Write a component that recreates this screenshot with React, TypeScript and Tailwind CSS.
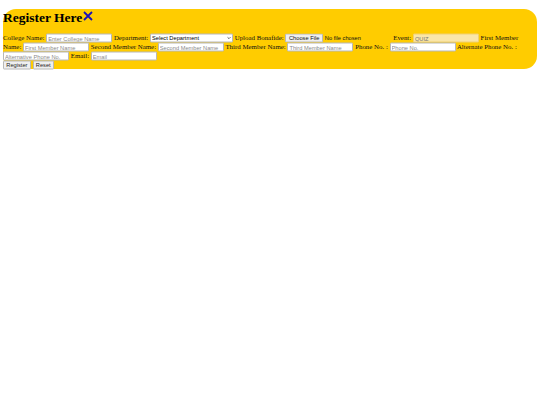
const inputClass =
  "box-border h-[9px] w-[66px] translate-y-[0.5px] rounded-[1px] border border-[#b8b8b8] bg-white px-[1px] py-0 align-top font-['Liberation_Sans',sans-serif] text-[5.7px] leading-[7px] text-black placeholder:text-[#8a8a8a]";

const buttonClass =
  "box-border h-[8.5px] translate-y-[0.5px] rounded-[1px] border border-[#b8b8b8] bg-[#efefef] px-[2.3px] py-0 align-top font-['Liberation_Sans',sans-serif] text-[5.7px] font-normal leading-[6px] text-[#222]";

function Field({ label, placeholder }: { label: string; placeholder: string }) {
  return (
    <>
      {label} <input type="text" placeholder={placeholder} className={inputClass} />{" "}
    </>
  );
}

export default function App() {
  return (
    <div className="min-h-[405px] bg-white px-[3px] pt-[9px] font-['Liberation_Serif',serif] text-[#111]">
      <form className="h-[60px] rounded-[13px] bg-[#ffcc00] text-[6.88px] leading-[9px]">
        <h1 className="flex h-[16px] items-center text-[13.5px] font-bold text-black">
          Register Here
          <svg viewBox="0 0 10 10" className="ml-[1px] h-[10px] w-[10px] -translate-y-[1px]">
            <path d="M1 1 9 9M9 1 1 9" stroke="#1a10b8" strokeWidth="1.8" fill="none" />
          </svg>
        </h1>
        <div className="pt-[8px]">
          <Field label="College Name:" placeholder="Enter College Name" />
          Department:{" "}
          <span className="relative inline-block translate-y-[0.5px] align-top">
            <select className="box-border block h-[9px] w-[83px] appearance-none rounded-[1px] border border-[#b8b8b8] bg-white py-0 pl-[1px] font-['Liberation_Sans',sans-serif] text-[5.7px] leading-[7px] text-black">
              <option>Select Department</option>
            </select>
            <svg viewBox="0 0 6 4" className="absolute right-[2px] top-[3px] h-[3px] w-[4px]">
              <path d="M.7.7 3 3 5.3.7" stroke="#222" strokeWidth="1" fill="none" />
            </svg>
          </span>{" "}
          Upload Bonafide:{" "}
          <input
            type="file"
            className="w-[106px] translate-y-[0.5px] align-top font-['Liberation_Sans',sans-serif] text-[5.7px] leading-[7px] file:mr-[2px] file:h-[9px] file:rounded-[1px] file:border file:border-[#b8b8b8] file:bg-[#efefef] file:px-[2.5px] file:py-0 file:text-[5.7px]"
          />{" "}
          Event:{" "}
          <input
            type="text"
            defaultValue="QUIZ"
            readOnly
            className={`${inputClass} !border-[#f0d070] !bg-[#fae6a8] !text-[#757575]`}
          />{" "}
          First Member Name: <input type="text" placeholder="First Member Name" className={inputClass} />{" "}
          <Field label="Second Member Name:" placeholder="Second Member Name" />
          <Field label="Third Member Name:" placeholder="Third Member Name" />
          <Field label="Phone No. :" placeholder="Phone No." />
          Alternate Phone No. : <input type="text" placeholder="Alternative Phone No." className={inputClass} />{" "}
          <Field label="Email:" placeholder="Email" />
          <br />
          <button type="button" className={buttonClass}>
            Register
          </button>{" "}
          <button type="button" className={buttonClass}>
            Reset
          </button>
        </div>
      </form>
    </div>
  );
}
